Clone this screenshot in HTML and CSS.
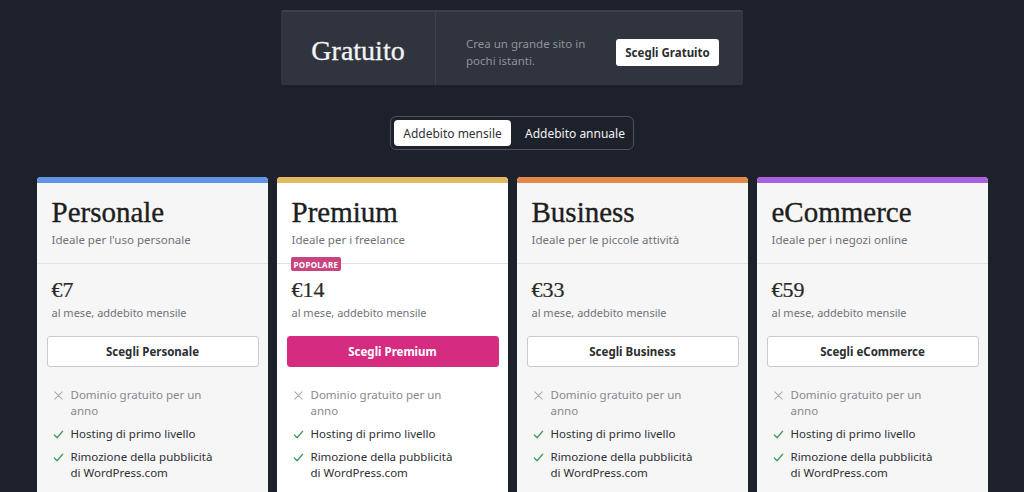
FILE: index.html
```html
<!DOCTYPE html>
<html lang="it">
<head>
<meta charset="utf-8">
<link rel="stylesheet" href="styles.css">
</head>
<body>
<div class="page">
  <div class="free">
    <div class="free-name">Gratuito</div>
    <div class="free-body">
      <p class="free-text">Crea un grande sito in pochi istanti.</p>
      <button class="free-btn">Scegli Gratuito</button>
    </div>
  </div>

  <div class="toggle">
    <span class="tab active">Addebito mensile</span>
    <span class="tab">Addebito annuale</span>
  </div>

  <div class="plans">
    <div class="card grey">
      <div class="bar blue"></div>
      <div class="head">
        <h2 class="title">Personale</h2>
        <p class="sub">Ideale per l'uso personale</p>
      </div>
      <div class="price-box">
        <div class="price">€7</div>
        <div class="period">al mese, addebito mensile</div>
        <button class="choose">Scegli Personale</button>
      </div>
      <ul class="features">
        <li class="off"><svg viewBox="0 0 12 12"><path d="M2 2l8 8M10 2l-8 8"/></svg><span>Dominio gratuito per un anno</span></li>
        <li><svg viewBox="0 0 12 12"><path d="M1.5 6.5l3 3 6-7"/></svg><span>Hosting di primo livello</span></li>
        <li><svg viewBox="0 0 12 12"><path d="M1.5 6.5l3 3 6-7"/></svg><span>Rimozione della pubblicità di WordPress.com</span></li>
        <li><svg viewBox="0 0 12 12"><path d="M1.5 6.5l3 3 6-7"/></svg><span>Pagamenti ricorrenti</span></li>
      </ul>
    </div>

    <div class="card white">
      <div class="bar gold"></div>
      <div class="head">
        <h2 class="title">Premium</h2>
        <p class="sub">Ideale per i freelance</p>
        <span class="badge">POPOLARE</span>
      </div>
      <div class="price-box">
        <div class="price">€14</div>
        <div class="period">al mese, addebito mensile</div>
        <button class="choose primary">Scegli Premium</button>
      </div>
      <ul class="features">
        <li class="off"><svg viewBox="0 0 12 12"><path d="M2 2l8 8M10 2l-8 8"/></svg><span>Dominio gratuito per un anno</span></li>
        <li><svg viewBox="0 0 12 12"><path d="M1.5 6.5l3 3 6-7"/></svg><span>Hosting di primo livello</span></li>
        <li><svg viewBox="0 0 12 12"><path d="M1.5 6.5l3 3 6-7"/></svg><span>Rimozione della pubblicità di WordPress.com</span></li>
        <li><svg viewBox="0 0 12 12"><path d="M1.5 6.5l3 3 6-7"/></svg><span>Pagamenti ricorrenti</span></li>
      </ul>
    </div>

    <div class="card grey">
      <div class="bar orange"></div>
      <div class="head">
        <h2 class="title">Business</h2>
        <p class="sub">Ideale per le piccole attività</p>
      </div>
      <div class="price-box">
        <div class="price">€33</div>
        <div class="period">al mese, addebito mensile</div>
        <button class="choose">Scegli Business</button>
      </div>
      <ul class="features">
        <li class="off"><svg viewBox="0 0 12 12"><path d="M2 2l8 8M10 2l-8 8"/></svg><span>Dominio gratuito per un anno</span></li>
        <li><svg viewBox="0 0 12 12"><path d="M1.5 6.5l3 3 6-7"/></svg><span>Hosting di primo livello</span></li>
        <li><svg viewBox="0 0 12 12"><path d="M1.5 6.5l3 3 6-7"/></svg><span>Rimozione della pubblicità di WordPress.com</span></li>
        <li><svg viewBox="0 0 12 12"><path d="M1.5 6.5l3 3 6-7"/></svg><span>Pagamenti ricorrenti</span></li>
      </ul>
    </div>

    <div class="card grey">
      <div class="bar purple"></div>
      <div class="head">
        <h2 class="title">eCommerce</h2>
        <p class="sub">Ideale per i negozi online</p>
      </div>
      <div class="price-box">
        <div class="price">€59</div>
        <div class="period">al mese, addebito mensile</div>
        <button class="choose">Scegli eCommerce</button>
      </div>
      <ul class="features">
        <li class="off"><svg viewBox="0 0 12 12"><path d="M2 2l8 8M10 2l-8 8"/></svg><span>Dominio gratuito per un anno</span></li>
        <li><svg viewBox="0 0 12 12"><path d="M1.5 6.5l3 3 6-7"/></svg><span>Hosting di primo livello</span></li>
        <li><svg viewBox="0 0 12 12"><path d="M1.5 6.5l3 3 6-7"/></svg><span>Rimozione della pubblicità di WordPress.com</span></li>
        <li><svg viewBox="0 0 12 12"><path d="M1.5 6.5l3 3 6-7"/></svg><span>Pagamenti ricorrenti</span></li>
      </ul>
    </div>
  </div>
</div>
</body>
</html>
```

FILE: styles.css
```css
* { box-sizing: border-box; }
html, body {
  margin: 0;
  padding: 0;
  height: 492px;
  overflow: hidden;
  background: #1d212c;
  font-family: "Noto Sans", "Open Sans", sans-serif;
}
.page {
  display: flex;
  flex-direction: column;
  align-items: center;
  padding-top: 10px;
}

/* Free banner */
.free {
  width: 462px;
  height: 75px;
  display: flex;
  background: #30343e;
  border-top: 2px solid #3d414b;
  border-radius: 2px;
}
.free-name {
  width: 155px;
  display: flex;
  align-items: center;
  justify-content: center;
  border-right: 1px solid #3d414b;
  font-family: "Liberation Serif", serif;
  font-size: 28px;
  color: #f4f4f4;
  padding-top: 4px;
  -webkit-text-stroke: 0.3px #f4f4f4;
}
.free-body {
  flex: 1;
  display: flex;
  align-items: center;
  justify-content: space-between;
  padding: 7px 24px 0 30px;
}
.free-text {
  margin: 0;
  width: 135px;
  font-size: 11.5px;
  line-height: 17px;
  color: #8f939b;
}
.free-btn {
  width: 103px;
  height: 27px;
  border: 0;
  border-radius: 3px;
  background: #fff;
  font-family: inherit;
  font-weight: 700;
  font-size: 11.5px;
  color: #2b2d2f;
  padding: 0;
}

/* Toggle */
.toggle {
  margin-top: 31px;
  display: flex;
  padding: 3px;
  border: 1px solid #4e535d;
  border-radius: 6px;
  height: 34px;
  width: 244px;
}
.tab {
  display: flex;
  align-items: center;
  height: 26px;
  flex: 1;
  padding-left: 14px;
  white-space: nowrap;
  font-size: 12px;
  color: #f3f3f3;
  border-radius: 4px;
}
.tab.active {
  flex: none;
  width: 117px;
  padding-left: 0;
  justify-content: center;
  background: #fff;
  color: #2f3238;
}

/* Plans */
.plans {
  margin-top: 27px;
  display: flex;
  gap: 9px;
}
.card {
  width: 231px;
  height: 330px;
  border-radius: 4px 4px 0 0;
  overflow: hidden;
  position: relative;
}
.card.grey { background: #f6f6f6; }
.card.white { background: #ffffff; }
.bar { height: 6px; }
.bar.blue { background: #6292e3; }
.bar.gold { background: #e3b862; }
.bar.orange { background: #e3874b; }
.bar.purple { background: #aa5fde; }

.head {
  position: relative;
  padding: 11px 15px 15px;
  border-bottom: 1px solid #e2e2e2;
}
.title {
  margin: 0;
  font-family: "Liberation Serif", serif;
  font-weight: 400;
  font-size: 29px;
  line-height: 36px;
  color: #1e1e1e;
  -webkit-text-stroke: 0.35px #1e1e1e;
}
.sub {
  margin: 2px 0 0;
  font-size: 11.5px;
  line-height: 16px;
  color: #6f7378;
}
.badge {
  position: absolute;
  left: 14px;
  bottom: -8px;
  height: 14px;
  padding: 0 3px;
  display: flex;
  align-items: center;
  background: #c8457f;
  color: #fff;
  font-size: 8px;
  font-weight: 700;
  letter-spacing: 0.3px;
  border-radius: 2px;
}

.price-box {
  padding: 12px 9px 0 10px;
}
.price {
  padding-left: 5px;
  font-family: "Liberation Serif", serif;
  font-size: 22px;
  line-height: 28px;
  color: #2a2a2a;
  -webkit-text-stroke: 0.2px #2a2a2a;
}
.period {
  padding-left: 5px;
  margin-top: 1px;
  font-size: 11px;
  line-height: 16px;
  color: #6f7378;
}
.choose {
  margin-top: 15px;
  display: block;
  width: 100%;
  height: 31px;
  border: 1px solid #c9cbcd;
  border-radius: 3px;
  background: #fff;
  font-family: inherit;
  font-weight: 700;
  font-size: 11.5px;
  color: #2b2d2f;
  padding: 0;
}
.choose.primary {
  background: #d52c82;
  border-color: #d52c82;
  color: #fff;
}

.features {
  list-style: none;
  margin: 20px 0 0;
  padding: 0 0 0 16px;
  display: flex;
  flex-direction: column;
  gap: 7px;
}
.features li {
  display: flex;
  align-items: flex-start;
  font-size: 11.5px;
  line-height: 16px;
  color: #2c2e31;
}
.features li.off { color: #85898e; }
.features svg {
  width: 11px;
  height: 11px;
  margin: 3px 7px 0 0;
  flex: none;
  fill: none;
  stroke: #3d9d5e;
  stroke-width: 1.4;
  stroke-linecap: round;
  stroke-linejoin: round;
}
.features li.off svg { stroke: #a5a8ac; stroke-width: 1.1; }
.features span { max-width: 150px; }
```
